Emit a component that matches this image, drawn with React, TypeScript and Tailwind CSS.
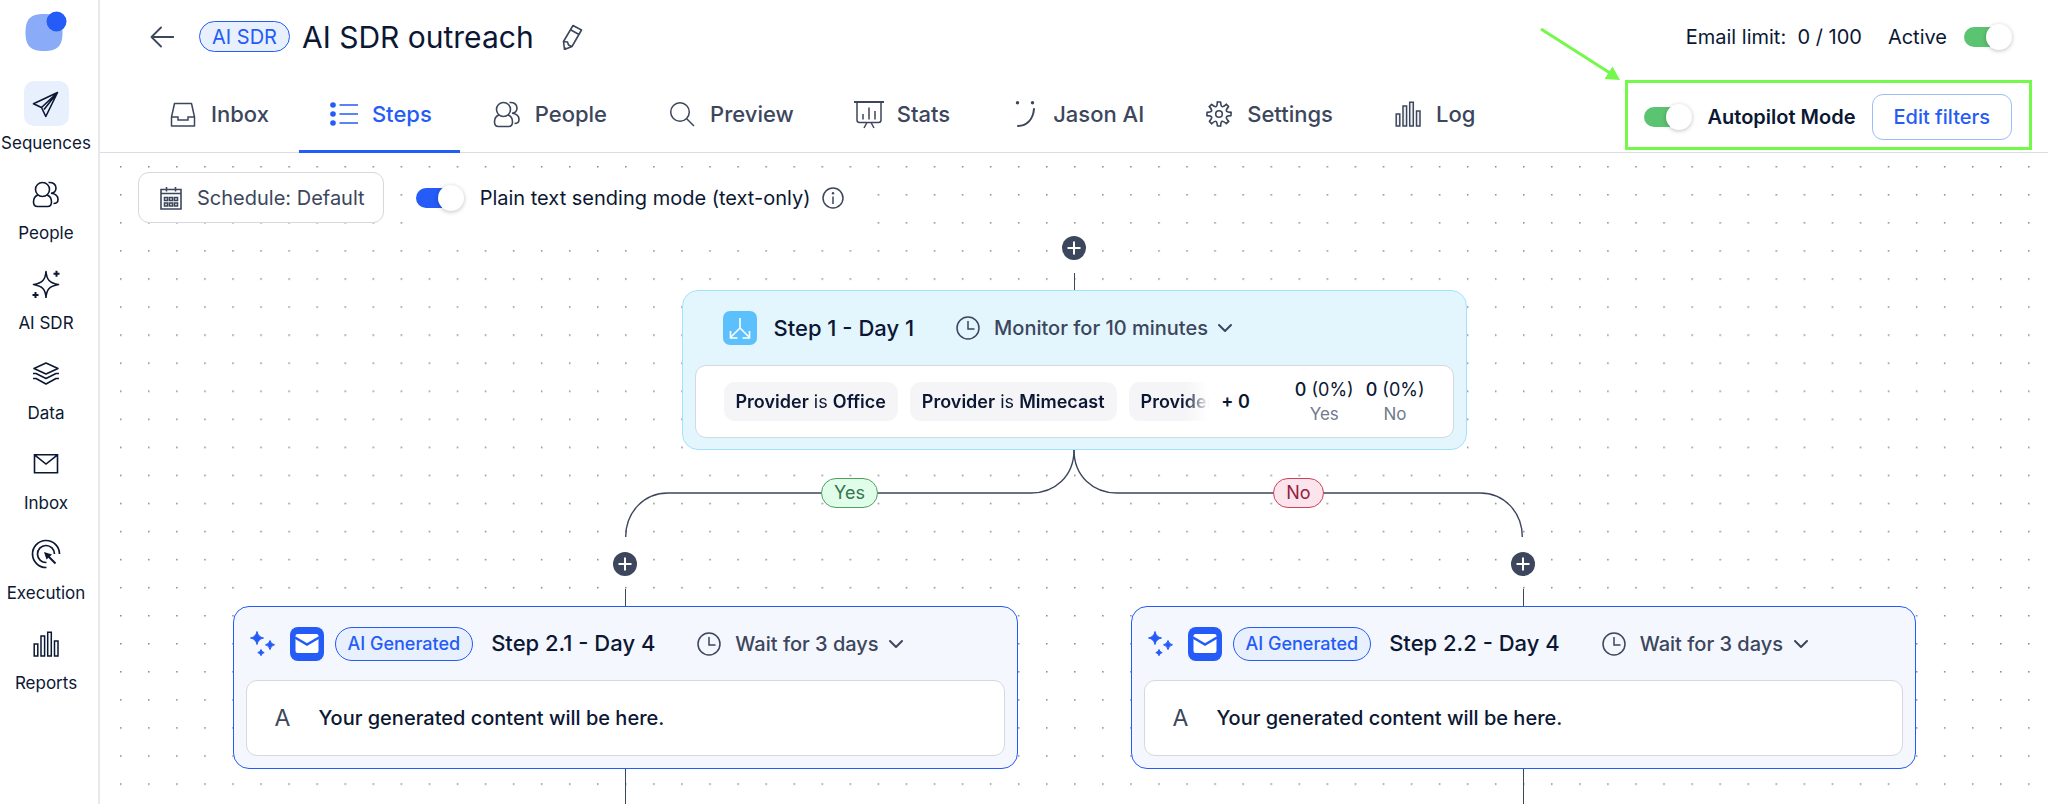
import { useState, type ReactNode } from 'react';

type IconProps = { className?: string };

function Svg({ size = 24, sw = 1.5, className, children }: { size?: number; sw?: number; className?: string; children: ReactNode }) {
  return (
    <svg
      viewBox={`0 0 ${size} ${size}`}
      width={size}
      height={size}
      fill="none"
      stroke="currentColor"
      strokeWidth={sw}
      className={className}
      aria-hidden="true"
    >
      {children}
    </svg>
  );
}

function Logo() {
  return (
    <svg width="42" height="42" viewBox="0 0 42 42" aria-hidden="true">
      <path d="M19 4C32.500 4 37.500 9 37.500 22.500C37.500 36 32.500 41 19 41C5.500 41 .500 36 .500 22.500C.500 9 5.500 4 19 4Z" fill="#8aabf8" />
      <circle cx="31.500" cy="11.500" r="10" fill="#255bf6" />
    </svg>
  );
}

function SendIcon() {
  return (
    <Svg size={28} sw={1.6}>
      <path d="M25.500 2.500L1.500 13.800L9.500 17.500L13.800 26.500L25.500 2.500ZM25.500 2.500L9.500 17.500M25.500 2.500L12 19.500" strokeLinejoin="round" />
    </Svg>
  );
}

function PeopleIcon({ className }: IconProps) {
  return (
    <Svg size={28} sw={1.6} className={className}>
      <circle cx="10.500" cy="9.500" r="7" />
      <path d="M6 15C3 16 1.500 18.500 1.500 22C1.500 25 2.800 26.500 5.500 26.500H15.500C18.200 26.500 19.500 25 19.500 22C19.500 18.500 18 16 15 15" />
      <path d="M16.500 2.500C21 2 24 4.500 24 8C24 11 22 13 19 13.300C23.500 13.800 26 16 26 19.500C26 22 24.500 23.500 21.500 23.500" />
    </Svg>
  );
}

function SparkleIcon() {
  return (
    <Svg size={28} sw={1.6}>
      <path d="M14 1.500C14.600 9.500 17.500 13 26.500 14.500C17.500 16 14.600 19.500 14 27.500C13.400 19.500 10.500 16 1.500 14.500C10.500 13 13.400 9.500 14 1.500Z" strokeLinejoin="round" />
      <path d="M24.500 .800V6.800M21.500 3.800H27.500M3.500 22V28M.500 25H6.500" strokeWidth="2" />
    </Svg>
  );
}

function LayersIcon() {
  return (
    <Svg size={28} sw={1.6}>
      <path d="M14 3L26 8.500L14 14L2 8.500Z" strokeLinejoin="round" />
      <path d="M1 13.500H4L14 18.500L24 13.500H27M1 18.500H4L14 24L24 18.500H27" strokeLinejoin="round" />
    </Svg>
  );
}

function MailIcon() {
  return (
    <Svg size={28} sw={1.6}>
      <path d="M2.500 4.800H25.500V22.800H2.500ZM2.500 4.800L14 14L25.500 4.800" />
    </Svg>
  );
}

function ExecutionIcon() {
  return (
    <Svg size={30} sw={1.7}>
      <path d="M15.500 28.500A13.500 13.500 0 1 1 28.500 15" />
      <path d="M15.500 23.500A8.500 8.500 0 1 1 23.500 15" />
      <path d="M15 15L24.500 24.500" strokeWidth="2" />
      <path d="M13 13L21 15.500L15.500 20.500Z" fill="currentColor" stroke="none" />
    </Svg>
  );
}

function BarsIcon({ className }: IconProps) {
  return (
    <Svg size={28} sw={1.5} className={className}>
      <path d="M2.200 14H5.800V26H2.200ZM9 6H12.600V26H9ZM15.700 2.200H19.300V26H15.700ZM22.500 11H26V26H22.500Z" />
    </Svg>
  );
}

function TrayIcon() {
  return (
    <Svg size={28}>
      <path d="M5.500 3.500H22.500L25.500 17V26H2.500V17Z" strokeLinejoin="round" />
      <path d="M2.500 17H9V20H19V17H25.500" />
    </Svg>
  );
}

function ListIcon() {
  return (
    <Svg size={28} sw={1.5}>
      <path d="M9.500 5H28M9.500 14H28M9.500 23H28" />
      <g fill="currentColor" stroke="none">
        <circle cx="3" cy="5" r="2.800" />
        <circle cx="3" cy="14" r="2.800" />
        <circle cx="3" cy="23" r="2.800" />
      </g>
    </Svg>
  );
}

function SearchIcon() {
  return (
    <Svg size={28}>
      <circle cx="12" cy="12" r="9.300" />
      <path d="M18.500 18.500L26 26" />
    </Svg>
  );
}

function StatsIcon() {
  return (
    <Svg size={30}>
      <path d="M0 3H30" strokeWidth="2" />
      <path d="M3 3V21C3 22.700 3.800 23.500 5.500 23.500H24.500C26.200 23.500 27 22.700 27 21V3M13 23.500L10 29M17 23.500L20 29M9 15V20.500M15 8.500V20.500M21 12V20.500" />
    </Svg>
  );
}

function JasonIcon() {
  return (
    <Svg size={28} sw={2}>
      <path d="M7 26C16 26 22 19.500 23 9" strokeLinecap="round" />
      <g fill="currentColor" stroke="none">
        <circle cx="6.500" cy="2.800" r="1.700" />
        <circle cx="21.500" cy="2.800" r="1.700" />
      </g>
    </Svg>
  );
}

const gearTeeth = [0, 45, 90, 135, 180, 225, 270, 315];

function GearIcon() {
  return (
    <Svg size={28} sw={1.6}>
      <circle cx="14" cy="14" r="3.300" />
      {gearTeeth.map((angle) => (
        <path
          key={angle}
          d="M12.400 2H15.600C15.900 7.500 17.250 8.060 21.350 4.400"
          strokeLinejoin="round"
          strokeLinecap="round"
          transform={`rotate(${angle} 14 14)`}
        />
      ))}
    </Svg>
  );
}

function CalendarIcon() {
  return (
    <Svg size={24} sw={1.6}>
      <path d="M2 3.500H22V23H2ZM2 7.500H22M7.500 1V5.500M16.500 1V5.500" />
      <path d="M5.500 11.500H8.500V14.500H5.500ZM10.500 11.500H13.500V14.500H10.500ZM15.500 11.500H18.500V14.500H15.500ZM5.500 17H8.500V20H5.500ZM10.500 17H13.500V20H10.500ZM15.500 17H18.500V20H15.500Z" />
    </Svg>
  );
}

function ClockIcon() {
  return (
    <Svg size={24}>
      <circle cx="12" cy="12" r="11" />
      <path d="M12 5V13H18.500" />
    </Svg>
  );
}

function ChevronIcon() {
  return (
    <Svg size={14} sw={2} className="pointer-events-none">
      <path d="M1 4L7 10L13 4" strokeLinecap="round" strokeLinejoin="round" />
    </Svg>
  );
}

function BranchIcon() {
  return (
    <svg width="34" height="34" viewBox="0 0 34 34" fill="none" aria-hidden="true">
      <rect width="34" height="34" rx="7" fill="#5bc0fb" />
      <path d="M17 7V17L8 26M17 17L26 26M7.500 20V27H14.500M26.500 20V27H19.500" stroke="#fff" strokeWidth="1.600" />
    </svg>
  );
}

function MailBadge() {
  return (
    <svg width="34" height="34" viewBox="0 0 34 34" aria-hidden="true">
      <rect width="34" height="34" rx="8" fill="#255bf6" />
      <rect x="5.500" y="7" width="23" height="19" rx="2" fill="#fff" />
      <path d="M5 10.500L17 17.500L29 10.500" fill="none" stroke="#255bf6" strokeWidth="2.600" />
    </svg>
  );
}

function StarsIcon() {
  return (
    <svg width="34" height="34" viewBox="0 0 34 34" fill="#255bf6" aria-hidden="true">
      <path d="M11 4.500Q12 10 17.500 11Q12 12 11 17.500Q10 12 4.500 11Q10 10 11 4.500Z" stroke="#255bf6" strokeLinejoin="round" />
      <path d="M24 13.500Q24.800 17 28.500 17.800Q24.800 18.600 24 22.600Q23.200 18.600 19.500 17.800Q23.200 17 24 13.500Z" stroke="#255bf6" strokeLinejoin="round" />
      <path d="M15 22.500Q15.600 25 18.200 25.600Q15.600 26.200 15 28.700Q14.400 26.200 11.800 25.600Q14.400 25 15 22.500Z" stroke="#255bf6" strokeLinejoin="round" />
    </svg>
  );
}

function Switch({ id, tone }: { id: string; tone: 'green' | 'blue' }) {
  const [on, setOn] = useState(true);
  return (
    <input
      id={id}
      type="checkbox"
      role="switch"
      checked={on}
      onChange={(e) => setOn(e.currentTarget.checked)}
      className={`relative h-[26px] w-12 shrink-0 cursor-pointer appearance-none before:absolute before:top-[3px] before:left-0 before:h-5 before:w-11 before:rounded-full before:bg-slate-300 after:absolute after:top-0 after:left-0 after:size-[26px] after:rounded-full after:bg-white after:shadow-[0_1px_4px_rgba(0,0,0,0.25)] checked:after:left-[22px] ${
        tone === 'green' ? 'checked:before:bg-[#5bc470]' : 'checked:before:bg-[#255bf6]'
      }`}
    />
  );
}

const sidebarItems = [
  { label: 'Sequences', icon: <SendIcon />, active: true },
  { label: 'People', icon: <PeopleIcon /> },
  { label: 'AI SDR', icon: <SparkleIcon /> },
  { label: 'Data', icon: <LayersIcon /> },
  { label: 'Inbox', icon: <MailIcon /> },
  { label: 'Execution', icon: <ExecutionIcon /> },
  { label: 'Reports', icon: <BarsIcon /> },
];

const tabs = [
  { label: 'Inbox', icon: <TrayIcon /> },
  { label: 'Steps', icon: <ListIcon />, active: true },
  { label: 'People', icon: <PeopleIcon /> },
  { label: 'Preview', icon: <SearchIcon /> },
  { label: 'Stats', icon: <StatsIcon /> },
  { label: 'Jason AI', icon: <JasonIcon /> },
  { label: 'Settings', icon: <GearIcon /> },
  { label: 'Log', icon: <BarsIcon className="fill-[#eef2f7]" /> },
];

function Sidebar() {
  return (
    <nav className="flex w-[100px] shrink-0 flex-col items-center border-r-2 border-[#e7e8ec] bg-white pr-[6px]">
      <a href="#home" aria-label="Home" className="mt-[10px]">
        <Logo />
      </a>
      <ul className="mt-[29px] flex flex-col gap-4">
        {sidebarItems.map((item) => (
          <li key={item.label}>
            <a href={`#${item.label}`} className="flex flex-col items-center gap-[5px] text-[17px] leading-6">
              <span className={`flex size-[45px] items-center justify-center rounded-[10px] ${item.active ? 'bg-[#e8f0fe]' : ''}`}>
                {item.icon}
              </span>
              {item.label}
            </a>
          </li>
        ))}
      </ul>
    </nav>
  );
}

function Header() {
  return (
    <header className="flex h-[153px] shrink-0 justify-between border-b border-[#dcdde3] bg-white pr-9 pl-[38px]">
      <div className="flex flex-col justify-between">
        <div className="flex h-[73px] items-center pl-3">
          <button type="button" aria-label="Back" className="text-[#3c465c]">
            <Svg size={24} sw={1.8}>
              <path d="M23.500 12H1.500M11 2.500L1.500 12L11 21.500" strokeLinejoin="round" strokeLinecap="round" />
            </Svg>
          </button>
          <span className="ml-[25px] flex h-[31px] items-center rounded-full border border-[#255bf6] bg-[#e8f0fe] px-3 text-xl text-[#255bf6]">
            AI SDR
          </span>
          <h1 className="ml-3 text-[30px] leading-9">AI SDR outreach</h1>
          <button type="button" aria-label="Rename" className="ml-[27px] text-[#3c465c]">
            <Svg size={26} sw={1.6}>
              <path d="M12 1.500L20.500 6L11 22.500L3.500 25.500L2.500 17.500ZM9.500 5.800L18 10.500M2.500 17.500L6.500 18L7.500 21L11 22.500M4 24L5.500 25" strokeLinejoin="round" />
            </Svg>
          </button>
        </div>
        <nav className="-mb-px flex gap-0.5">
          {tabs.map((tab) => (
            <a
              key={tab.label}
              href={`#${tab.label}`}
              className={`flex h-[75px] items-center gap-[11px] border-b-3 px-7 text-[22px] font-medium ${
                tab.active ? 'border-[#255bf6] text-[#255bf6]' : 'border-transparent text-[#3c465c]'
              }`}
            >
              <span className="flex w-[34px] justify-center">{tab.icon}</span>
              {tab.label}
            </a>
          ))}
        </nav>
      </div>
      <div className="flex flex-col items-end text-xl">
        <div className="flex h-[73px] items-center">
          <span className="whitespace-pre">Email limit:{'  '}0 / 100</span>
          <label htmlFor="active" className="mr-[17px] ml-[26px]">
            Active
          </label>
          <Switch id="active" tone="green" />
        </div>
        <div className="relative mt-[7px] -mr-5 flex h-[70px] items-center border-3 border-[#74f84c] pt-[3px] pr-[17px] pl-4">
          <svg className="absolute -top-14 -left-[88px]" width="84" height="56" viewBox="0 0 84 56" aria-hidden="true">
            <path d="M1 2L70 46" stroke="#74f84c" strokeWidth="3" />
            <path d="M80 53L64.500 52L72.500 39.500Z" fill="#74f84c" />
          </svg>
          <Switch id="autopilot" tone="green" />
          <label htmlFor="autopilot" className="mx-4 font-semibold">
            Autopilot Mode
          </label>
          <button type="button" className="h-[46px] rounded-[11px] border border-[#9dbcfb] px-[21px] font-medium text-[#255bf6]">
            Edit filters
          </button>
        </div>
      </div>
    </header>
  );
}

function Delay({ id, value }: { id: string; value: string }) {
  return (
    <div className="ml-[42px] flex items-center text-xl font-medium text-[#3c465c]">
      <ClockIcon />
      <select id={id} aria-label="Delay" className="ml-[14px] cursor-pointer appearance-none bg-transparent">
        <option>{value}</option>
      </select>
      <span className="ml-[10px]">
        <ChevronIcon />
      </span>
    </div>
  );
}

function AddButton() {
  return (
    <button type="button" aria-label="Add step" className="size-6 rounded-full bg-[#3c465c] text-white">
      <Svg size={24} sw={2}>
        <path d="M12 5.500V18.500M5.500 12H18.500" />
      </Svg>
    </button>
  );
}

function Chip({ value }: { value?: string }) {
  return (
    <li className="flex h-[39px] shrink-0 items-center rounded-[11px] bg-[#f5f5f8] px-3 whitespace-pre">
      <b className="font-semibold">Provider</b>
      {value ? (
        <>
          {' is '}
          <b className="font-semibold">{value}</b>
        </>
      ) : null}
    </li>
  );
}

function Outcome({ label }: { label: string }) {
  return (
    <div className="flex flex-col items-center">
      <dd className="leading-6">
        <b className="font-medium">0</b> (0%)
      </dd>
      <dt className="order-last text-[17px] leading-6 text-[#717a8e]">{label}</dt>
    </div>
  );
}

function ConditionStep() {
  return (
    <section className="w-[785px] rounded-2xl border border-[#a3e2fc] bg-[#e3f6fe] px-3 pb-[11px]">
      <div className="flex h-[74px] items-center pl-7">
        <BranchIcon />
        <h2 className="ml-[17px] text-[22px] font-medium">Step 1 - Day 1</h2>
        <Delay id="delay-1" value="Monitor for 10 minutes" />
      </div>
      <div className="flex h-[73px] items-center rounded-[11px] border border-[#d6d8df] bg-white px-7 text-lg">
        <ul className="flex min-w-0 flex-1 gap-3 overflow-hidden [mask-image:linear-gradient(to_left,transparent,black_24px)]">
          <Chip value="Office" />
          <Chip value="Mimecast" />
          <Chip />
        </ul>
        <span className="ml-3 font-semibold">+ 0</span>
        <dl className="ml-[45px] flex gap-3">
          <Outcome label="Yes" />
          <Outcome label="No" />
        </dl>
      </div>
    </section>
  );
}

function EmailStep({ step }: { step: string }) {
  return (
    <div className="flex w-[785px] flex-col items-center">
      <AddButton />
      <div className="mt-[13px] h-[17px] w-px bg-[#3c465c]" />
      <section className="w-full rounded-2xl border border-[#255bf6] bg-[#f4f7fe] px-3 pb-3">
        <div className="flex h-[73px] items-center">
          <StarsIcon />
          <span className="ml-[10px]">
            <MailBadge />
          </span>
          <span className="ml-[11px] flex h-[34px] items-center rounded-full border border-[#255bf6] bg-[#e8f0fe] px-3 text-lg font-medium text-[#255bf6]">
            AI Generated
          </span>
          <h2 className="ml-[18px] text-[22px] font-medium">Step {step} - Day 4</h2>
          <Delay id={`delay-${step}`} value="Wait for 3 days" />
        </div>
        <div className="flex h-[76px] items-center rounded-[11px] border border-[#d6d8df] bg-white px-7">
          <span className="text-[23px] text-[#3c465c]">A</span>
          <p className="ml-7 text-xl font-medium">Your generated content will be here.</p>
        </div>
      </section>
      <div className="min-h-[35px] w-px flex-1 bg-[#3c465c]" />
    </div>
  );
}

function Branches() {
  return (
    <div className="relative grid h-[86px] w-[898px] shrink-0 grid-cols-2 place-items-center text-lg leading-7">
      <svg className="absolute inset-0" width="898" height="87" viewBox="0 0 898 87" fill="none" stroke="#3c465c" strokeWidth="1.400" aria-hidden="true">
        <path d="M449 0C449 26 430 43 406 43H43C19 43 .700 62 .700 87" />
        <path d="M449 0C449 26 468 43 492 43H855C879 43 897.300 62 897.300 87" />
      </svg>
      <span className="relative rounded-full border border-[#4e9f60] bg-[#e0fdea] px-3 text-[#37744a]">Yes</span>
      <span className="relative rounded-full border border-[#d0405c] bg-[#fbe4eb] px-3 text-[#96203f]">No</span>
    </div>
  );
}

function Canvas() {
  return (
    <main className="relative isolate flex flex-1 flex-col overflow-hidden bg-white pt-[19px]">
      <svg className="absolute inset-0 -z-10 size-full" aria-hidden="true">
        <defs>
          <pattern id="dots" width="28.060" height="28.060" x="20" y="13" patternUnits="userSpaceOnUse">
            <rect width="1.500" height="1.500" fill="#85868b" />
          </pattern>
        </defs>
        <rect width="100%" height="100%" fill="url(#dots)" />
      </svg>
      <div className="flex h-[51px] items-center pl-[38px] text-xl">
        <button type="button" className="flex h-full items-center rounded-[11px] border border-[#d6d8df] bg-white pr-[18px] pl-5 text-[#3c465c]">
          <CalendarIcon />
          <span className="ml-[14px]">Schedule: Default</span>
        </button>
        <div className="ml-5 flex h-[53px] items-center bg-white pr-5 pl-3">
          <Switch id="plain-text" tone="blue" />
          <label htmlFor="plain-text" className="ml-4">
            Plain text sending mode (text-only)
          </label>
          <button type="button" aria-label="About plain text mode" className="ml-3 text-[#3c465c]">
            <Svg size={22}>
              <circle cx="11" cy="11" r="10" />
              <path d="M11 9.500V17" />
              <circle cx="11" cy="6.300" r="1.200" fill="currentColor" stroke="none" />
            </Svg>
          </button>
        </div>
      </div>
      <div className="flex flex-1 flex-col items-center pt-[13px]">
        <AddButton />
        <div className="mt-[13px] h-[17px] w-px bg-[#3c465c]" />
        <ConditionStep />
        <Branches />
        <div className="flex flex-1 gap-[113px] pt-4">
          <EmailStep step="2.1" />
          <EmailStep step="2.2" />
        </div>
      </div>
    </main>
  );
}

export default function App() {
  return (
    <div className="flex min-h-screen bg-white font-[Inter,'Liberation_Sans',sans-serif] text-[#0b1733]">
      <Sidebar />
      <div className="flex min-w-0 flex-1 flex-col">
        <Header />
        <Canvas />
      </div>
    </div>
  );
}
